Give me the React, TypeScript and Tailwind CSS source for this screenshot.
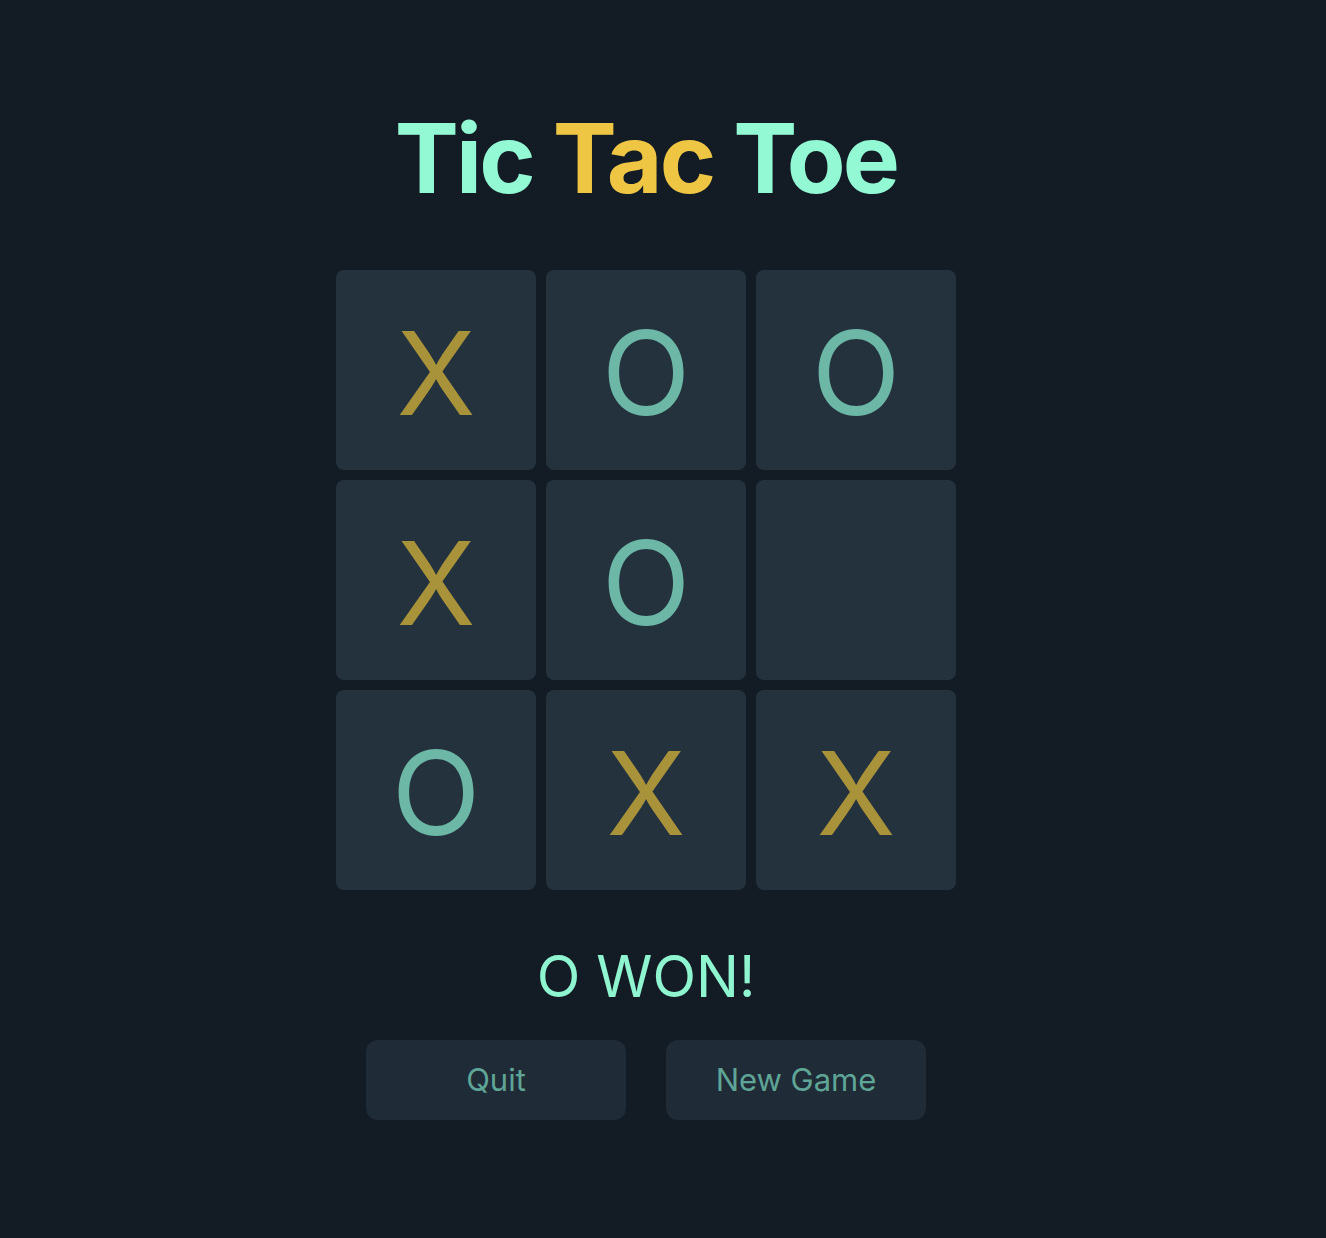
import { FC } from "react";

type Mark = "X" | "O" | "";

const board: Mark[] = ["X", "O", "O", "X", "O", "", "O", "X", "X"];

const Cell: FC<{ mark: Mark }> = ({ mark }) => (
  <div className="flex h-[200px] w-[200px] items-center justify-center rounded-[8px] bg-[#24323e] pt-[6px]">
    {mark && (
      <span
        className={`text-[116px] leading-none font-normal ${
          mark === "X" ? "text-[#a8923a]" : "text-[#6cb7a6]"
        }`}
      >
        {mark}
      </span>
    )}
  </div>
);

export default function App() {
  return (
    <div
      className="flex min-h-[1238px] w-full flex-col items-center bg-[#131c25] pt-[110px] pr-[34px]"
      style={{ fontFamily: "Inter, 'Noto Sans', sans-serif" }}
    >
      <h1 className="text-[96px] leading-none font-bold tracking-[-0.03em] text-[#93f9d4]">
        Tic <span className="text-[#eec643]">Tac</span> Toe
      </h1>

      <div className="mt-[64px] grid grid-cols-[repeat(3,200px)] gap-[10px]">
        {board.map((m, i) => (
          <Cell key={i} mark={m} />
        ))}
      </div>

      <p className="mt-[58px] text-[57px] leading-none text-[#8ff5d0]">O WON!</p>

      <div className="mt-[35px] flex gap-[40px]">
        <button className="h-[80px] w-[260px] rounded-[12px] bg-[#1f2b36] text-[31px] text-[#5fa597]">
          Quit
        </button>
        <button className="h-[80px] w-[260px] rounded-[12px] bg-[#1f2b36] text-[31px] text-[#5fa597]">
          New Game
        </button>
      </div>
    </div>
  );
}
